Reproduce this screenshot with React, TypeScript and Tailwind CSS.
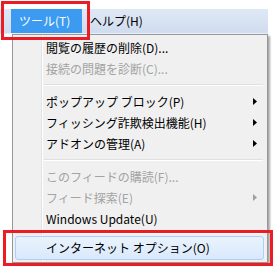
import React from "react";

const Arrow = ({ gray }: { gray?: boolean }) => (
  <svg width="4" height="7" viewBox="0 0 4 7" className="shrink-0">
    <path d="M0 0 L4 3.5 L0 7 Z" fill={gray ? "#a0a0a0" : "#000"} />
  </svg>
);

type Item = { label: string; disabled?: boolean; arrow?: boolean };

const Row = ({ item }: { item: Item }) => (
  <div
    className={`h-[21px] flex items-center pl-[33px] pr-[10px] justify-between ${
      item.disabled ? "text-[#a3a3a3]" : "text-black"
    }`}
  >
    <span className="whitespace-nowrap leading-none">{item.label}</span>
    {item.arrow && <Arrow gray={item.disabled} />}
  </div>
);

const Sep = ({ h }: { h: string }) => (
  <div className={`${h} flex flex-col justify-center pl-[31px] pr-[4px]`}>
    <div className="h-px bg-[#e0e0e0]" />
    <div className="h-px bg-white" />
  </div>
);

export default function App() {
  const g1: Item[] = [
    { label: "閲覧の履歴の削除(D)..." },
    { label: "接続の問題を診断(C)...", disabled: true },
  ];
  const g2: Item[] = [
    { label: "ポップアップ ブロック(P)", arrow: true },
    { label: "フィッシング詐欺検出機能(H)", arrow: true },
    { label: "アドオンの管理(A)", arrow: true },
  ];
  const g3: Item[] = [
    { label: "このフィードの購読(F)...", disabled: true },
    { label: "フィード探索(E)", disabled: true, arrow: true },
    { label: "Windows Update(U)" },
  ];
  return (
    <div
      className="relative w-[280px] h-[270px] bg-white overflow-hidden text-[12px]"
      style={{ fontFamily: '"Noto Sans CJK JP", "Noto Sans", sans-serif' }}
    >
      <div className="pt-[9px]">
        <div className="h-[24px] w-[268px] bg-[linear-gradient(to_bottom,#dfe8f5,#d0dcef)] flex">
          <div className="ml-[11px] w-[71px] bg-[#3c9bf0] text-white flex items-center pl-[8px]">
            <span className="leading-none">ツール(T)</span>
          </div>
          <div className="ml-[8px] flex items-center text-black">
            <span className="leading-none">ヘルプ(H)</span>
          </div>
        </div>
        <div className="h-px w-[268px] bg-[#e9eff8]" />
      </div>
      <div className="ml-[12px] w-[256px] border border-[#979797] bg-[#f0f0f0] shadow-[2px_2px_2px_rgba(0,0,0,0.35)] py-[2px] bg-[linear-gradient(to_right,#f0f0f0_28px,#e2e3e3_28px,#e2e3e3_29px,#ffffff_29px,#ffffff_30px,#f0f0f0_30px)]">
        {g1.map((it) => (
          <Row key={it.label} item={it} />
        ))}
        <Sep h="h-[12px]" />
        {g2.map((it) => (
          <Row key={it.label} item={it} />
        ))}
        <Sep h="h-[12px]" />
        {g3.map((it) => (
          <Row key={it.label} item={it} />
        ))}
        <Sep h="h-[7px]" />
        <div className="h-[24px] ml-[2px] mr-[3px] rounded-[3px] border border-[#aecff7] bg-[linear-gradient(to_bottom,#eaf3fd,#d9e9fc)] flex items-center pl-[30px]">
          <span className="leading-none whitespace-nowrap">インターネット オプション(O)</span>
        </div>
      </div>
      <div className="absolute left-[1px] top-[1px] w-[89px] h-[39px] border-[3px] border-[#ec1c24]" />
      <div className="absolute left-[3px] top-[230px] w-[270px] h-[36px] border-[3px] border-[#ec1c24]" />
    </div>
  );
}
